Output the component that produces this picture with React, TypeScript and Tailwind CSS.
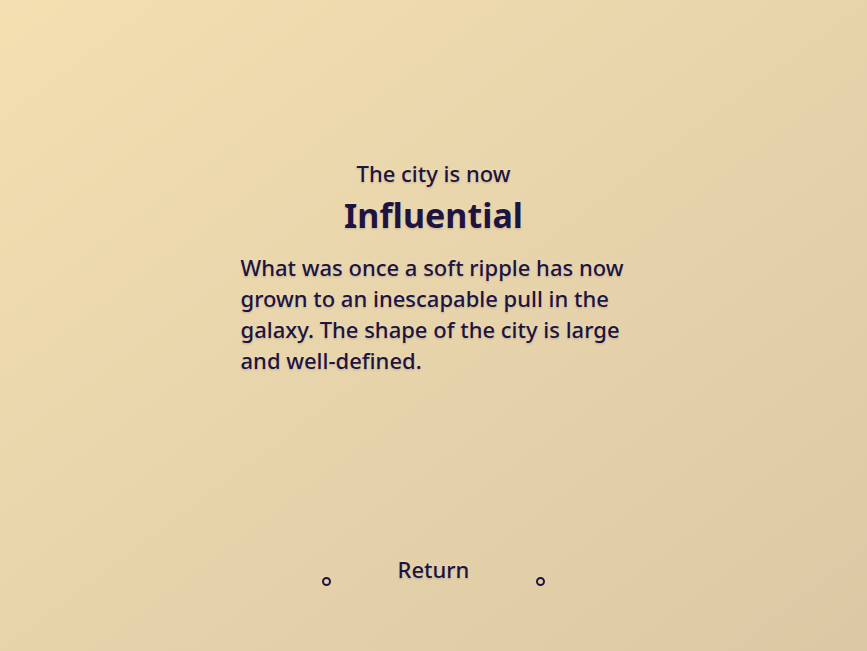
export default function App() {
  const shadow = "[text-shadow:0_0_3px_rgba(255,240,210,0.9),0_1px_2px_rgba(60,40,20,0.35)]";
  return (
    <div
      className="flex h-[651px] w-[867px] flex-col items-center bg-gradient-to-br from-[#f4dfb1] to-[#dbc9a5] text-[#1e1440]"
      style={{ fontFamily: '"Noto Sans", "Open Sans", sans-serif' }}
    >
      <div className={`mt-[158px] text-[22px] font-medium leading-[30px] ${shadow}`}>The city is now</div>
      <h1 className={`mt-[6px] text-[34px] font-bold leading-[42px] ${shadow}`}>Influential</h1>
      <p className={`mt-[16px] w-[386px] text-[22px] font-medium leading-[31px] ${shadow}`}>
        What was once a soft ripple has now grown to an inescapable pull in the galaxy. The shape of
        the city is large and well-defined.
      </p>
      <div className="mt-auto mb-[65px] flex w-[224px] items-start justify-between">
        <span className="mt-[23px] h-[9px] w-[9px] rounded-full border-2 border-[#1e1440]" />
        <button className={`text-[22px] font-medium leading-[30px] ${shadow}`}>Return</button>
        <span className="mt-[23px] h-[9px] w-[9px] rounded-full border-2 border-[#1e1440]" />
      </div>
    </div>
  );
}
